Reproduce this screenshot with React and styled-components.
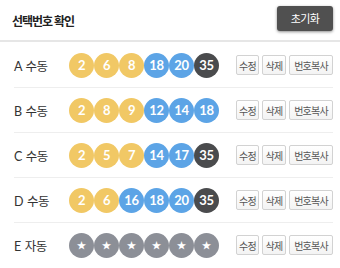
import React from 'react';
import styled, { createGlobalStyle } from 'styled-components';

const rows = [
	{ label: 'A', mode: '수동', nums: [2, 6, 8, 18, 20, 35] },
	{ label: 'B', mode: '수동', nums: [2, 8, 9, 12, 14, 18] },
	{ label: 'C', mode: '수동', nums: [2, 5, 7, 14, 17, 35] },
	{ label: 'D', mode: '수동', nums: [2, 6, 16, 18, 20, 35] },
	{ label: 'E', mode: '자동', nums: [null, null, null, null, null, null] },
];

const ballColor = (n) => {
	if (n == null) return '#8c8f97';
	if (n <= 10) return '#f1c865';
	if (n <= 20) return '#5ca4e6';
	if (n <= 30) return '#f07b7b';
	return '#4a4b4d';
};

export default function App() {
	return (
		<>
			<GlobalStyle />
			<Panel>
				<Header>
					<Title>선택번호 확인</Title>
					<ResetButton>초기화</ResetButton>
				</Header>
				<List>
					{rows.map((row) => (
						<Row key={row.label}>
							<Label>
								{row.label} {row.mode}
							</Label>
							<Balls>
								{row.nums.map((n, i) => (
									<Ball key={i} $bg={ballColor(n)} $star={n == null}>
										{n == null ? '★' : n}
									</Ball>
								))}
							</Balls>
							<Actions>
								<SmallButton $w={23}>수정</SmallButton>
								<SmallButton $w={24}>삭제</SmallButton>
								<SmallButton $w={44}>번호복사</SmallButton>
							</Actions>
						</Row>
					))}
				</List>
			</Panel>
		</>
	);
}

const GlobalStyle = createGlobalStyle`
	body {
		margin: 0;
		background: #fff;
		font-family: 'Lato', 'Noto Sans CJK KR', sans-serif;
	}
`;

const Panel = styled.div`
	width: 340px;
	background: #fff;
`;

const Header = styled.div`
	height: 40px;
	display: flex;
	align-items: center;
	justify-content: space-between;
	padding: 0 7px 0 12px;
	border-bottom: 2px solid #e6e6e6;
`;

const Title = styled.div`
	font-size: 12px;
	font-weight: 700;
	color: #222;
	letter-spacing: -1px;
`;

const ResetButton = styled.button`
	width: 56px;
	height: 25px;
	margin-top: -4px;
	border: 0;
	border-radius: 3px;
	background: #505050;
	color: #fff;
	font-family: 'Noto Sans CJK KR', sans-serif;
	font-size: 11px;
	letter-spacing: -0.6px;
	box-shadow: 0 1px 3px rgba(0, 0, 0, 0.45);
	padding: 0;
`;

const List = styled.div`
	padding: 1px 7px 0 14px;
`;

const Row = styled.div`
	height: 44px;
	display: flex;
	align-items: center;
	border-bottom: 1px solid #eeeeee;
	&:last-child {
		border-bottom: 0;
	}
`;

const Label = styled.div`
	width: 55px;
	font-size: 12.5px;
	color: #333;
	letter-spacing: -0.4px;
	word-spacing: 1px;
`;

const Balls = styled.div`
	display: flex;
`;

const Ball = styled.div`
	width: 25px;
	height: 25px;
	border-radius: 50%;
	background: ${(p) => p.$bg};
	color: #fff;
	display: flex;
	align-items: center;
	justify-content: center;
	font-family: 'Lato', sans-serif;
	font-weight: 700;
	font-size: ${(p) => (p.$star ? '10px' : '13px')};
	letter-spacing: -0.3px;
`;

const Actions = styled.div`
	margin-left: auto;
	display: flex;
	gap: 3px;
`;

const SmallButton = styled.button`
	width: ${(p) => p.$w}px;
	height: 20px;
	padding: 0;
	border: 1px solid #d2d2d2;
	border-radius: 2px;
	background: linear-gradient(#ffffff, #f3f3f3);
	color: #555;
	font-family: 'Noto Sans CJK KR', sans-serif;
	font-size: 10px;
	letter-spacing: -0.8px;
`;
